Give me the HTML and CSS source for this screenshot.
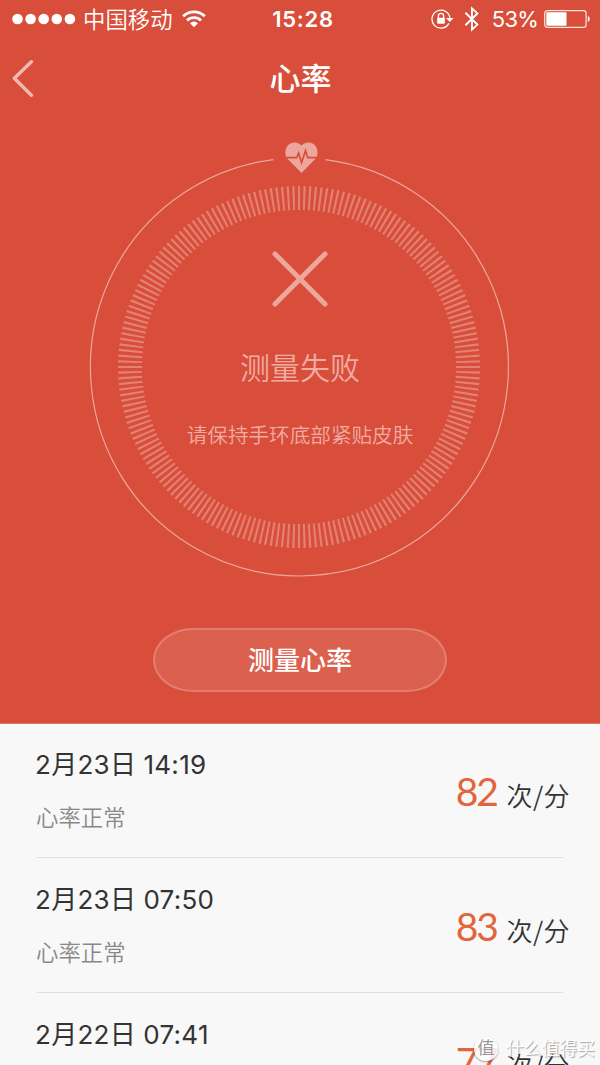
FILE: index.html
```html
<!DOCTYPE html>
<html lang="zh-CN">
<head>
    <meta charset="utf-8">
    <title>心率</title>
    <link rel="stylesheet" href="styles.css">
</head>
<body>

<div class="screen">
    <div class="top">
        <div class="status">
            <div class="status-left">
                <svg class="signal" width="64" height="12" viewBox="0 0 64 12" fill="#fff">
                    <circle cx="5.5" cy="6" r="5.3"/>
                    <circle cx="18.6" cy="6" r="5.3"/>
                    <circle cx="31.7" cy="6" r="5.3"/>
                    <circle cx="44.8" cy="6" r="5.3"/>
                    <circle cx="57.9" cy="6" r="5.3"/>
                </svg>
                <span class="carrier">中国移动</span>
                <svg class="wifi" width="24" height="18" viewBox="0 0 24 18" fill="none" stroke="#fff" stroke-width="2.8">
                    <path d="M1.2 6.2a15.4 15.4 0 0 1 21.6 0"/>
                    <path d="M5 10.4a10 10 0 0 1 14 0"/>
                    <path d="M12 17.2l-4-4a5.7 5.7 0 0 1 8 0z" fill="#fff" stroke="none"/>
                </svg>
            </div>
            <div class="time">15:28</div>
            <div class="status-right">
                <svg class="lock" width="23" height="20" viewBox="0 0 23 20" fill="none" stroke="#fff" stroke-width="1.3">
                    <path d="M17.9 14.4A9 9 0 1 1 18.9 9"/>
                    <path d="M15 9h7.6l-3.8 4z" fill="#fff" stroke="none"/>
                    <path d="M7.4 9V7a2.6 2.6 0 0 1 5.2 0v2"/>
                    <rect x="6.2" y="8.7" width="7.6" height="6" rx=".7" fill="#fff" stroke="none"/>
                </svg>
                <svg class="bluetooth" width="16" height="26" viewBox="0 0 16 26" fill="none" stroke="#fff" stroke-width="1.9">
                    <path d="M1.4 6.8L13.4 18.6 8 23.6V2.4l5.4 5L1.4 19.2"/>
                </svg>
                <span class="percent">53%</span>
                <svg class="battery" width="47" height="18" viewBox="0 0 47 18">
                    <rect x=".7" y=".7" width="41.4" height="16.6" rx="2.6" fill="none" stroke="#fff" stroke-opacity=".85" stroke-width="1.2"/>
                    <rect x="2.3" y="2.3" width="20.2" height="13.4" rx="1" fill="#fff"/>
                    <path d="M43.8 6c2.6.8 2.6 5.2 0 6z" fill="#fff"/>
                </svg>
            </div>
        </div>

        <div class="nav">
            <a class="back" href="#">
                <svg width="22" height="38" viewBox="0 0 22 38" fill="none" stroke="#fff" stroke-opacity=".6" stroke-width="3.4" stroke-linecap="round" stroke-linejoin="round">
                    <path d="M19.4 2.7L2.3 19.3l17.1 17"/>
                </svg>
            </a>
            <h1 class="title">心率</h1>
        </div>

        <div class="dial">
            <svg class="dial-ring" width="422" height="440" viewBox="0 0 422 440" fill="none" stroke="#fff">
                <path d="M184.5 19.6A209 209 0 1 0 236.3 19.6" stroke-opacity=".5" stroke-width="1.2"/>
                <circle cx="210" cy="227" r="169" pathLength="2000" stroke-opacity=".29" stroke-width="24" stroke-dasharray="4 6" stroke-dashoffset="2"/>
                <path d="M212.5 33L198.5 18.8C194.5 14 196.2 3 205 2.4c3.6-.2 6 1.3 7.5 3.1 1.5-1.8 3.9-3.3 7.5-3.1 8.8.6 10.5 11.6 6.5 16.4z" fill="#eda69c" stroke="none"/>
                <path d="M195.5 17.7h12.2l1.9-4.7 3 9.6 3.9-11.8 2.3 6.9h10.7" stroke="#d84e3a" stroke-width="1.7"/>
            </svg>
            <div class="dial-text">
                <svg class="cross" width="58" height="58" viewBox="0 0 58 58" stroke="#eda69c" stroke-width="5" stroke-linecap="round">
                    <path d="M4 4l50 50M54 4L4 54"/>
                </svg>
                <div class="result">测量失败</div>
                <div class="hint">请保持手环底部紧贴皮肤</div>
            </div>
        </div>

        <button class="measure">测量心率</button>
    </div>

    <div class="list">
        <div class="item">
            <div class="item-info">
                <div class="date">2月23日 14:19</div>
                <div class="state">心率正常</div>
            </div>
            <div class="rate"><span class="num">82</span><span class="unit">次/分</span></div>
        </div>
        <div class="item">
            <div class="item-info">
                <div class="date">2月23日 07:50</div>
                <div class="state">心率正常</div>
            </div>
            <div class="rate"><span class="num">83</span><span class="unit">次/分</span></div>
        </div>
        <div class="item">
            <div class="item-info">
                <div class="date">2月22日 07:41</div>
            </div>
            <div class="rate"><span class="num">77</span><span class="unit">次/分</span></div>
        </div>
    </div>

    <div class="watermark">
        <span class="watermark-logo">值</span>
        <span class="watermark-text">什么值得买</span>
    </div>
</div>

</body>
</html>
```
FILE: styles.css
```css
* { box-sizing: border-box; }
body { margin: 0; background: #f8f8f8; font-family: Inter, "Noto Sans CJK SC", sans-serif; }
svg { display: block; flex: none; }

.screen { position: relative; width: 600px; height: 1065px; overflow: hidden; }
.top { display: flex; flex-direction: column; align-items: center; height: 724px; background: #d84e3a; border-bottom: 1px solid #e27a6b; }

/* status bar */
.status { display: grid; grid-template-columns: 1fr auto 1fr; align-items: center; width: 100%; height: 40px; padding: 0 10px 2px 12px; color: #fff; font-size: 22px; line-height: 34px; }
.status-left { display: flex; align-items: center; }
.carrier { margin-left: 7px; padding-top: 1px; font-weight: 350; font-size: 22.4px; }
.wifi { margin-left: 9px; }
.time { padding-left: 4px; font-weight: 600; font-size: 22px; letter-spacing: 0.7px; }
.status-right { display: flex; align-items: center; justify-content: flex-end; }
.bluetooth { margin-left: 10px; }
.percent { margin: 0 6px 0 12px; font-size: 22px; letter-spacing: -0.8px; }
.battery { margin-right: -1px; }

/* title bar */
.nav { display: grid; grid-template-columns: 1fr auto 1fr; align-items: center; width: 100%; height: 76px; padding: 0 11px 0 12px; }
.title { grid-column: 2; margin: 0; padding-top: 2px; color: #fff; font-size: 31px; font-weight: 500; line-height: 40px; }

/* dial */
.dial { display: grid; width: 422px; height: 440px; margin-top: 24px; }
.dial-ring, .dial-text { grid-area: 1 / 1; }
.dial-text { display: flex; flex-direction: column; align-items: center; padding-top: 110px; color: #f0aca3; }
.result { margin-top: 38px; font-size: 30px; font-weight: 350; line-height: 44px; }
.hint { margin-top: 31px; font-size: 20.6px; font-weight: 350; line-height: 30px; white-space: nowrap; }

.measure { width: 294px; height: 64px; margin-top: 48px; padding: 0 0 3px; border: 2px solid rgba(255, 255, 255, 0.2); border-radius: 40px / 32px; background: rgba(255, 255, 255, 0.1); color: #fff; font: 500 26px "Noto Sans CJK SC", sans-serif; }

/* records */
.item { display: flex; justify-content: space-between; height: 135px; margin: 0 37px; padding-top: 22px; }
.item + .item { padding-top: 23px; border-top: 1px solid #e0e0e0; }
.item:first-child { height: 133px; }
.date { margin-left: -2px; color: #333; font-size: 26px; font-weight: 380; line-height: 38px; letter-spacing: 0.3px; word-spacing: -0.5px; white-space: nowrap; }
.state { margin: 17px 0 0 -1px; color: #888; font-size: 22.4px; font-weight: 350; line-height: 34px; }
.rate { display: flex; align-items: baseline; height: 60px; margin: 15px -7px 0 0; line-height: 60px; }
.num { color: #e2653c; font-family: Lato, sans-serif; font-size: 39px; line-height: 60px; letter-spacing: -2.2px; }
.unit { margin-left: 10px; color: #333; font-family: "Noto Sans CJK SC", sans-serif; font-size: 26px; font-weight: 350; letter-spacing: 0.4px; }

.watermark { position: absolute; right: 5px; bottom: 1px; display: flex; align-items: center; }
.watermark-logo { width: 24px; height: 24px; margin-right: 8px; border-radius: 50%; background: rgba(255, 255, 255, 0.85); box-shadow: 0 1px 2px rgba(0, 0, 0, 0.4); color: #999; font-size: 17px; line-height: 23px; text-align: center; }
.watermark-text { color: #fff; font-size: 17.8px; line-height: 30px; text-shadow: 1px 1px 1px rgba(0, 0, 0, 0.35); }
```
